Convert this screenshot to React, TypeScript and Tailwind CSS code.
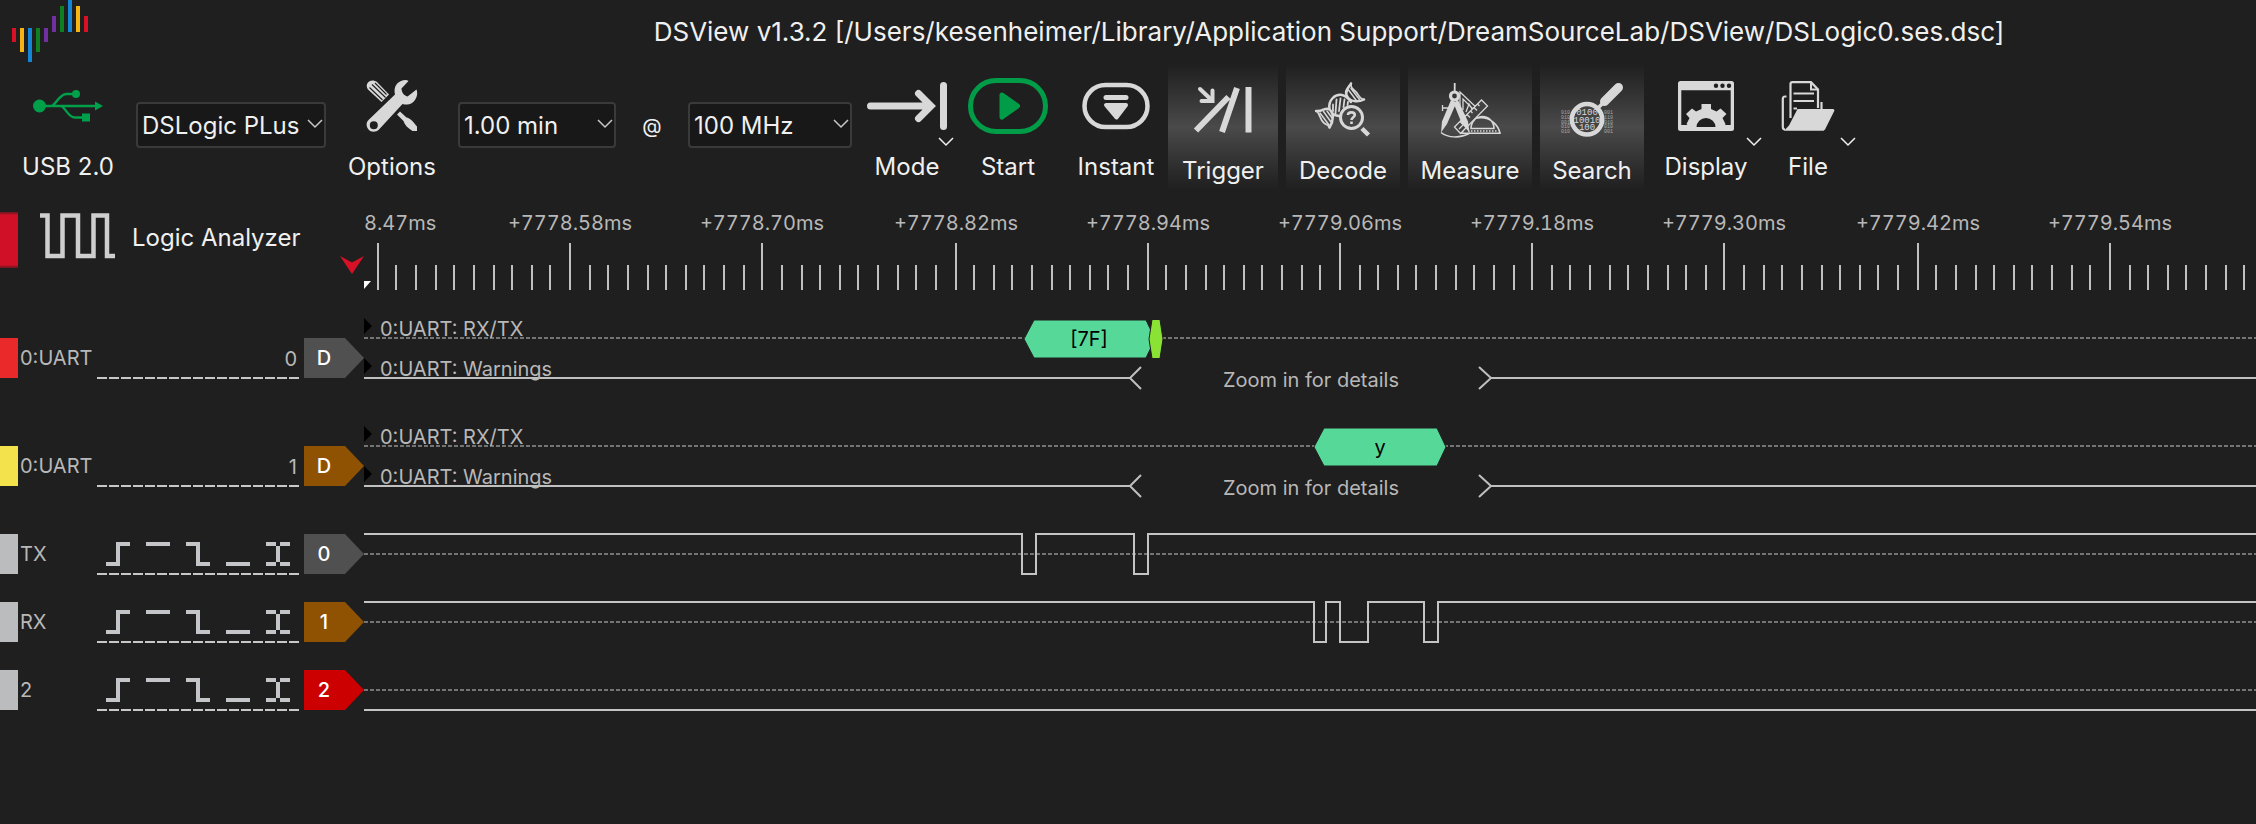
import type { ReactNode } from "react";

const FG = "#d8d8d8";
const BG = "#1f1f1f";

/* ---------- icons ---------- */

const logoBars = [
  [12, 28, 14, "#d81126"],
  [20, 28, 24, "#f5b414"],
  [28, 28, 34, "#1387d6"],
  [36, 28, 24, "#0f7f22"],
  [44, 28, 14, "#7030a0"],
  [52, 16, 16, "#7030a0"],
  [60, 6, 26, "#0f7f22"],
  [68, 0, 32, "#1387d6"],
  [76, 6, 26, "#f5b414"],
  [84, 16, 16, "#d81126"],
] as const;

function Logo() {
  return (
    <svg width="100" height="64" viewBox="0 0 100 64" aria-hidden="true">
      {logoBars.map(([x, y, h, c]) => (
        <rect key={x} x={x} y={y} width="4" height={h} fill={c} />
      ))}
    </svg>
  );
}

function UsbIcon() {
  return (
    <svg width="70" height="56" viewBox="0 0 70 56" fill="#00a04a" stroke="#00a04a">
      <circle cx="6.5" cy="28" r="6.5" stroke="none" />
      <path d="M8 28H63M19 28c4-2 8-12 14-12H43M28 28c5 2 7 11.500 14 11.500H50" fill="none" strokeWidth="2.400" />
      <circle cx="43" cy="16" r="4" stroke="none" />
      <path d="M62 23.500L70 28L62 32.500ZM49 35.500H57V43.500H49Z" stroke="none" />
    </svg>
  );
}

function OptionsIcon() {
  return (
    <svg width="56" height="56" viewBox="0 0 56 56" fill={FG}>
      <path d="M4 4.500C6 2 10 1.800 13 4L25 16.500L17.500 24L4 11.500C2.300 9 2.300 6.500 4 4.500Z" />
      <path d="M8 6.500L21.500 19.500M5.500 9.500L18.500 22M11 5L22.500 16.500" stroke={BG} strokeWidth="1.100" fill="none" />
      <path d="M33 36.500L36 33.500L42.500 39.500C46 40 49 43.500 53 48.500V53H48.500C44 50 40.500 47 39.500 43Z" />
      <path
        fillRule="evenodd"
        d="M4.500 42L31 16.500C29.500 10 32 5 37 3C40 1.800 43 1.800 44.500 3L37.500 10.500C37.500 14 39.500 17.500 43.500 18.500L52.500 11.500C54.300 16 52.500 22 48 25C45 26.800 41.500 27 38.500 26L15 51.500C12 54.500 7 54.500 4.500 51.500C2 48.500 2 44.500 4.500 42ZM9.800 43.200A4 4 0 1 0 9.800 51.200A4 4 0 1 0 9.800 43.200Z"
      />
    </svg>
  );
}

function ModeIcon() {
  return (
    <svg width="80" height="56" viewBox="0 0 80 56" fill="none" stroke={FG} strokeWidth="7" strokeLinecap="round">
      <path d="M3.500 28H62M51.500 15.500L64 28L51.500 40.500" />
      <path d="M76.500 7.500V48.500" />
    </svg>
  );
}

function StartIcon() {
  return (
    <svg width="80" height="56" viewBox="0 0 80 56">
      <rect x="2.5" y="2.500" width="75" height="51" rx="25.500" fill="none" stroke="#009c48" strokeWidth="5" />
      <path d="M34 17L49.500 28L34 39Z" fill="#009c48" stroke="#009c48" strokeWidth="5" strokeLinejoin="round" />
    </svg>
  );
}

function InstantIcon() {
  return (
    <svg width="68" height="56" viewBox="0 0 68 56">
      <rect x="2.500" y="7" width="63" height="42" rx="21" fill="none" stroke={FG} strokeWidth="4.500" />
      <path d="M24 19.500H44" stroke={FG} strokeWidth="5" strokeLinecap="round" />
      <path d="M24 27H44L34.500 39.500Z" fill={FG} stroke={FG} strokeWidth="4" strokeLinejoin="round" />
    </svg>
  );
}

function TriggerIcon() {
  return (
    <svg width="60" height="56" viewBox="0 0 60 56" fill="none" stroke={FG}>
      <path d="M3 48.500L35.500 15M29 50L44 6M55.500 5V50.500" strokeWidth="6" />
      <path d="M7 7L18 17.500" strokeWidth="4" strokeLinecap="round" />
      <path d="M8.500 19H19.500V8.500" strokeWidth="4" strokeLinecap="round" />
    </svg>
  );
}

function DecodeIcon() {
  return (
    <svg width="56" height="56" viewBox="0 0 56 56" fill="none" stroke={FG} strokeLinecap="round">
      <path d="M1 29C7 30 10 25.500 13.500 27C18.500 29.500 19.500 38 14.500 45.500" strokeWidth="2.500" />
      <path d="M1 29C5 30 4 37 9 41C12 43 14 43 14.500 45.500" strokeWidth="1.800" />
      <path d="M5 31L14 43M8.500 29.500L16 40M12 29L17 36" strokeWidth="1.500" />
      <path d="M14.500 27C13 18 20 12 27 13C31 14 34 17 36 20" strokeWidth="2.500" />
      <path d="M17 31C19 34 21 33 24 34" strokeWidth="2.500" />
      <path d="M18 22.500V29M21.500 17.500L20.500 31.500M25.500 16.500L24 29M29.500 17.500L28.500 25M33 20L32.500 23" strokeWidth="1.800" />
      <path d="M36 1.500C34 5 29 9 32 14C35 20 43 20.500 49 17.500" strokeWidth="2.500" />
      <path d="M36 1.500C35 7 39 7 42 11C44 14 45 17 49 17.500" strokeWidth="1.800" />
      <path d="M33.500 8L41 18M36 6.500L44.500 17.500" strokeWidth="1.500" />
      <circle cx="36.500" cy="35.500" r="11" strokeWidth="3" fill="#464646" />
      <path d="M47 46.500L53.500 53" strokeWidth="4.500" strokeLinecap="butt" />
      <path d="M33 33C33 29.500 39.800 29.500 39.800 33C39.800 35 36.500 35.500 36.500 38M36.500 39.500V42" strokeWidth="2.600" strokeLinecap="butt" />
    </svg>
  );
}

function MeasureIcon() {
  return (
    <svg width="64" height="56" viewBox="0 0 64 56" fill="none" stroke={FG} strokeWidth="1.300">
      <path d="M4.500 23V29M4.500 26H11" />
      <path d="M22 32V10L42 29M25 28V17L36 28M28 30L31 22L34 27" />
      <path d="M24 51.300A19.500 20 0 0 1 62 51.300ZM33 46.500A10.500 11 0 0 1 56 46.500Z" strokeWidth="1.600" />
      <path d="M30 49H60" strokeDasharray="1.500 1.500" />
      <path d="M16.500 45L43.500 18L49.500 24L22.500 51.500Z" fill="#424242" />
      <path d="M22 39.500L25 42.500M25.500 36L27.500 38M29 32.500L32 35.500M32.500 29L34.500 31M36 25.500L39 28.500M39.500 22L41.500 24M21 47L25 43" />
      <path d="M16.700 1V9" strokeWidth="1.800" />
      <path d="M13 18L18.500 20.500L9 42L3 50.500L4 39.500Z" fill={FG} stroke="none" />
      <path d="M20 18L15.500 21L24 42L31.500 50.500L30 39.500Z" fill={FG} stroke="none" />
      <circle cx="16.500" cy="14" r="4" strokeWidth="3.200" fill="#353535" />
      <path d="M3 50.500C10 56 22 56.500 32 51" strokeWidth="1.500" />
    </svg>
  );
}

function SearchIcon() {
  const rows = ["010001", "010110", "001010", "010010", "010001"];
  return (
    <svg width="64" height="56" viewBox="0 0 64 56" fontFamily="Liberation Mono, monospace">
      {rows.map((r, i) => (
        <text key={i} x="1" y={32 + i * 4.8} fontSize="5" fill="#a8a8a8">
          {r.slice(0, 3)}
          <tspan x="44">{r.slice(3)}</tspan>
        </text>
      ))}
      <circle cx="27" cy="37.300" r="15.200" fill="#444444" stroke={FG} strokeWidth="4.500" />
      <g fill={FG} fontSize="9" textAnchor="middle">
        <text x="27" y="33">0100</text>
        <text x="27" y="40.500">10010</text>
        <text x="27" y="48">100</text>
      </g>
      <path d="M38 26L44 20" stroke={FG} strokeWidth="3.500" />
      <path d="M44.500 19.500L58.500 5.500" stroke={FG} strokeWidth="9" strokeLinecap="round" />
    </svg>
  );
}

function DisplayIcon() {
  return (
    <svg width="56" height="56" viewBox="0 -3 56 56" fill={FG}>
      <path
        fillRule="evenodd"
        d="M2.500 0H53.500Q56 0 56 2.500V47.500Q56 50 53.500 50H2.500Q0 50 0 47.500V2.500Q0 0 2.500 0ZM3.300 9.300V44H52.700V9.300Z"
      />
      <g fill={BG}>
        <circle cx="38" cy="4.800" r="2.200" />
        <circle cx="44.500" cy="4.800" r="2.200" />
        <circle cx="51" cy="4.800" r="2.200" />
      </g>
      <path d="M10 46L9.500 44L8.500 43L11.500 37L8 33L14 27.500L18 30.500L23.500 28V23H33V28L38.500 30.500L42.500 27.500L48.500 33L44.500 37L47.500 43L46.500 46Z" />
      <path d="M18.500 46A9.500 9 0 0 1 37.500 46Z" fill={BG} />
    </svg>
  );
}

function FileIcon() {
  return (
    <svg width="56" height="56" viewBox="0 -3 56 56" fill="none" stroke={FG}>
      <path d="M6.500 15.500H5Q2.800 15.500 2.800 18V46Q2.800 48.500 5 48.500" strokeWidth="2.200" />
      <path d="M10.500 37V3Q10.500 1.200 12.500 1.200H31L38 8.500V27" strokeWidth="2.200" />
      <path d="M31 1.500V8.500H38" strokeWidth="2" />
      <path d="M13.500 12.500H34M13.500 20H34M13.500 27.500H17" strokeWidth="2.200" />
      <path d="M41.500 21V29" strokeWidth="2.200" />
      <path d="M17.500 28H53.500L54.500 29.500L45 48.500L43.500 49.800H4L9 44.500Z" fill={FG} stroke="none" />
    </svg>
  );
}

function Chevron({ className = "" }: { className?: string }) {
  return (
    <svg width="16" height="10" viewBox="0 0 16 10" fill="none" stroke="currentColor" strokeWidth="1.500" className={className}>
      <path d="M1 1L8 8L15 1" />
    </svg>
  );
}

function SquareWave() {
  return (
    <svg width="76" height="46" viewBox="0 0 76 46" fill="none" stroke="#cfcfcf" strokeWidth="4.500">
      <path d="M0 2.500H7.500V43H22.500V2.500H38V43H53.500V2.500H67V43H75" />
    </svg>
  );
}

/* ---------- toolbar ---------- */

function Tool({ label, icon, width, chevron }: { label: string; icon: ReactNode; width: string; chevron?: string }) {
  return (
    <button className={`relative flex shrink-0 flex-col items-center gap-[17px] pt-3.5 ${width}`}>
      {icon}
      <span className="leading-8">{label}</span>
      {chevron && <Chevron className={`absolute top-[73px] ${chevron}`} />}
    </button>
  );
}

function Toggle({ label, icon, width }: { label: string; icon: ReactNode; width: string }) {
  return (
    <button
      aria-pressed="true"
      className={`flex shrink-0 flex-col items-center gap-[17px] bg-linear-to-b from-[#1f1f1f] via-[#4a4a4a] to-[#1f1f1f] pt-[18px] ${width}`}
    >
      {icon}
      <span className="leading-8">{label}</span>
    </button>
  );
}

function Combo({ label, options, width }: { label: string; options: string[]; width: string }) {
  return (
    <div className={`relative mt-[38px] h-[46px] shrink-0 ${width}`}>
      <select
        aria-label={label}
        className="h-full w-full appearance-none rounded border-2 border-[#3a3a3a] bg-[#181818] pt-0.5 pl-1 text-[#f0f0f0]"
      >
        {options.map((o) => (
          <option key={o}>{o}</option>
        ))}
      </select>
      <Chevron className="pointer-events-none absolute top-[17px] right-[3px] text-[#c8c8c8]" />
    </div>
  );
}

function Toolbar() {
  return (
    <div role="toolbar" className="flex h-[126px] text-2xl text-[#f0f0f0]">
      <div className="flex w-34 shrink-0 flex-col items-center gap-[17px] pt-3.5">
        <UsbIcon />
        <span className="leading-8">USB 2.0</span>
      </div>
      <Combo label="Device" options={["DSLogic PLus", "Demo Device"]} width="w-[190px]" />
      <Tool label="Options" icon={<OptionsIcon />} width="w-33" />
      <Combo label="Duration" options={["1.00 min", "10.00 s"]} width="w-[158px]" />
      <span className="mt-[38px] w-18 shrink-0 text-center text-xl leading-12">@</span>
      <Combo label="Sample rate" options={["100 MHz", "50 MHz"]} width="w-41" />
      <Tool label="Mode" icon={<ModeIcon />} width="w-[110px]" chevron="right-2" />
      <Tool label="Start" icon={<StartIcon />} width="w-23" />
      <div className="w-2.5 shrink-0" />
      <Tool label="Instant" icon={<InstantIcon />} width="w-26" />
      <div className="flex gap-2">
        <Toggle label="Trigger" icon={<TriggerIcon />} width="w-[110px]" />
        <Toggle label="Decode" icon={<DecodeIcon />} width="w-[114px]" />
        <Toggle label="Measure" icon={<MeasureIcon />} width="w-31" />
        <Toggle label="Search" icon={<SearchIcon />} width="w-26" />
      </div>
      <div className="w-3 shrink-0" />
      <Tool label="Display" icon={<DisplayIcon />} width="w-25" chevron="-right-1.5" />
      <Tool label="File" icon={<FileIcon />} width="w-26" chevron="right-1" />
    </div>
  );
}

/* ---------- ruler ---------- */

const TICK_ORIGIN = 13.6;
const TICK_STEP = 19.247;
const tickX = (k: number) => 2 * Math.round((TICK_ORIGIN + k * TICK_STEP) / 2);
const ticks = Array.from({ length: 200 }, (_, k) => k);
const majorLabels = [
  "+7778.58ms",
  "+7778.70ms",
  "+7778.82ms",
  "+7778.94ms",
  "+7779.06ms",
  "+7779.18ms",
  "+7779.30ms",
  "+7779.42ms",
  "+7779.54ms",
];

function Ruler() {
  return (
    <div className="relative min-w-0 flex-1 overflow-hidden text-xl leading-6 text-[#b8b8b8] tabular-nums">
      <svg className="h-full w-full">
        <g fill="#c0c0c0">
          {ticks.map((k) => (
            <rect key={k} x={tickX(k) - 1} y={k % 10 ? 75 : 53} width="2" height={k % 10 ? 25 : 47} />
          ))}
        </g>
        <path d="M0 91H7L0 99Z" fill="#fff" />
      </svg>
      <span className="absolute top-[21px] left-0">8.47ms</span>
      {majorLabels.map((t, i) => (
        <span key={t} className="absolute top-[21px] -translate-x-1/2" style={{ left: tickX((i + 1) * 10) }}>
          {t}
        </span>
      ))}
    </div>
  );
}

/* ---------- channels ---------- */

const dashes = "bg-[repeating-linear-gradient(90deg,#c8c8c8_0_10px,transparent_10px_12px)]";

const edges: [string, string][] = [
  ["Rising edge", "M0 22H14M12 24V0M10 2H24"],
  ["High level", "M0 2H24"],
  ["Falling edge", "M0 2H14M12 0V24M10 22H24"],
  ["Low level", "M0 22H24"],
  ["Either edge", "M0 2H10M14 2H24M12 4V20M0 22H10M14 22H24"],
];

type RowProps = {
  height: string;
  bar: string;
  name: string;
  index?: string;
  tag: string;
  tagColor: string;
  children: ReactNode;
};

function Row({ height, bar, name, index, tag, tagColor, children }: RowProps) {
  return (
    <div className={`flex ${height}`}>
      <div className="flex w-91 shrink-0 items-center text-xl">
        <div className={`h-10 w-[18px] ${bar}`} />
        <span className="w-[79px] pl-0.5 text-[#b8b8b8]">{name}</span>
        <div className="flex h-[42px] w-[202px] flex-col justify-between">
          {index ? (
            <span className="pt-1.5 pr-0.5 text-right leading-8 text-[#b8b8b8]">{index}</span>
          ) : (
            <div className="flex gap-4 pt-[9px] pl-[9px]">
              {edges.map(([label, d]) => (
                <button key={label} aria-label={label} className="size-6">
                  <svg width="24" height="24" viewBox="0 0 24 24" fill="none" stroke="#c4c5c8" strokeWidth="4">
                    <path d={d} />
                  </svg>
                </button>
              ))}
            </div>
          )}
          <div className={`h-0.5 ${dashes}`} />
        </div>
        <button
          className={`ml-[5px] h-10 w-15 pr-5 text-center font-medium text-white [clip-path:polygon(0_0,41px_0,100%_50%,41px_100%,0_100%)] ${tagColor}`}
        >
          {tag}
        </button>
      </div>
      <div className="relative min-w-0 flex-1 overflow-hidden text-xl leading-6 text-[#b8b8b8]">{children}</div>
    </div>
  );
}

const FAR = 6000;

function DecoderTrace({ children }: { children: ReactNode }) {
  return (
    <>
      <svg className="h-full w-full" fill="none">
        <path d={`M0 34H${FAR}`} stroke="#747474" strokeWidth="2" strokeDasharray="4 2" />
        <path d="M0 14L8 22L0 30ZM0 54L8 62L0 70Z" fill="#000" />
        <path d={`M0 74H766M777 63L766 74L777 85M1115 63L1127 74L1115 85M1127 74H${FAR}`} stroke="#c0c0c0" strokeWidth="2" />
        {children}
      </svg>
      <span className="absolute top-[13px] left-4">0:UART: RX/TX</span>
      <span className="absolute top-[53px] left-4">0:UART: Warnings</span>
      <span className="absolute top-16 left-[947px] -translate-x-1/2 whitespace-nowrap">Zoom in for details</span>
    </>
  );
}

function LogicTrace({ d }: { d: string }) {
  return (
    <svg className="h-full w-full" fill="none" strokeWidth="2">
      <path d={`M0 34H${FAR}`} stroke="#747474" strokeDasharray="4 2" />
      <path d={`${d}H${FAR}`} stroke="#c4c4c4" />
    </svg>
  );
}

export default function App() {
  return (
    <div className="min-h-screen overflow-hidden bg-[#1f1f1f] font-['Inter',sans-serif]">
      <header className="flex h-16">
        <Logo />
        <h1 className="flex-1 pt-4 pl-[302px] text-center text-[26px] leading-8 text-[#f0f0f0]">
          DSView v1.3.2 [/Users/kesenheimer/Library/Application Support/DreamSourceLab/DSView/DSLogic0.ses.dsc]
        </h1>
      </header>

      <Toolbar />

      <main>
        <div className="flex h-[114px]">
          <div className="relative flex w-91 shrink-0 pt-[22px]">
            <div className="h-14 w-[18px] bg-[linear-gradient(#6a1620,#d01027_6%,#d01027_94%,#6a1620)]" />
            <div className="flex h-12 items-center gap-4 pl-[22px]">
              <SquareWave />
              <h2 className="pt-1 text-2xl text-[#f0f0f0]">Logic Analyzer</h2>
            </div>
            <svg width="24" height="18" viewBox="0 0 24 18" className="absolute top-[66px] right-0">
              <path d="M0 0L12 6.500L24 0L12 18Z" fill="#d81126" />
            </svg>
          </div>
          <Ruler />
        </div>

        <Row height="h-27" bar="bg-[#ea2a2a]" name="0:UART" index="0" tag="D" tagColor="bg-[#505050]">
          <DecoderTrace>
            <path d="M660 35L670 16H782L791 35L782 54H670Z" fill="#56d998" stroke={BG} />
            <path d="M785 35L788 15.500H796L799 35L796 54.500H788Z" fill="#8ae234" stroke={BG} />
          </DecoderTrace>
          <span className="absolute top-[23px] left-[725px] -translate-x-1/2 text-black">[7F]</span>
        </Row>
        <Row height="h-27" bar="bg-[#f4e24c]" name="0:UART" index="1" tag="D" tagColor="bg-[#8f5202]">
          <DecoderTrace>
            <path d="M950 35L960 16H1073L1082 35L1073 54H960Z" fill="#56d998" stroke={BG} />
          </DecoderTrace>
          <span className="absolute top-[23px] left-[1016px] -translate-x-1/2 text-black">y</span>
        </Row>
        <Row height="h-17" bar="bg-[#babcbe]" name="TX" tag="0" tagColor="bg-[#505050]">
          <LogicTrace d="M0 14H658V54H672V14H770V54H784V14" />
        </Row>
        <Row height="h-17" bar="bg-[#babcbe]" name="RX" tag="1" tagColor="bg-[#8f5202]">
          <LogicTrace d="M0 14H950V54H962V14H976V54H1004V14H1060V54H1074V14" />
        </Row>
        <Row height="h-17" bar="bg-[#babcbe]" name="2" tag="2" tagColor="bg-[#cc0000]">
          <LogicTrace d="M0 54" />
        </Row>
      </main>
    </div>
  );
}
